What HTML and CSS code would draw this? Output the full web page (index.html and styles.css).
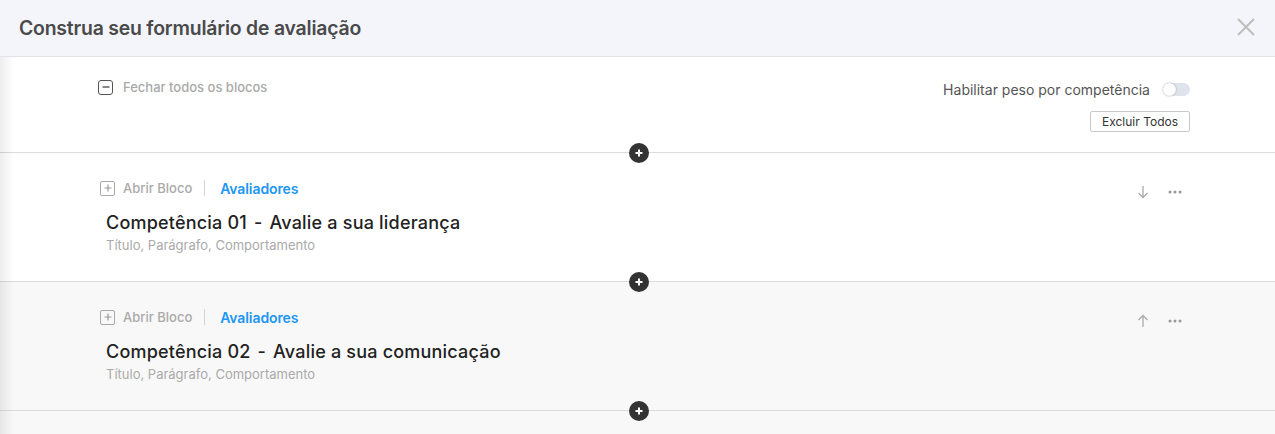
FILE: index.html
```html
<!DOCTYPE html>
<html lang="pt-BR">
<head>
<meta charset="utf-8">
<title>Construa seu formulário de avaliação</title>
<link rel="stylesheet" href="styles.css">
</head>
<body>
<div class="modal">
  <header class="header">
    <h1 class="header-title">Construa seu formulário de avaliação</h1>
    <button class="close" aria-label="Fechar">
      <svg width="20" height="20" viewBox="0 0 20 20"><path d="M2 2L18 18M18 2L2 18" stroke="#bdbdbd" stroke-width="2" fill="none"/></svg>
    </button>
  </header>
  <div class="content">
    <section class="toolbar section">
      <div class="collapse-all">
        <span class="box-icon"><svg width="10" height="10" viewBox="0 0 10 10"><path d="M1.5 5H8.5" stroke="#555" stroke-width="1.4"/></svg></span>
        <span>Fechar todos os blocos</span>
      </div>
      <div class="toolbar-right">
        <div class="weight">
          <span>Habilitar peso por competência</span>
          <span class="toggle"><span class="knob"></span></span>
        </div>
        <button class="btn">Excluir Todos</button>
      </div>
      <span class="add"><svg width="10" height="10" viewBox="0 0 10 10"><path d="M5 1.5V8.5M1.5 5H8.5" stroke="#fff" stroke-width="2"/></svg></span>
    </section>

    <section class="block section">
      <div class="block-main">
        <div class="block-actions">
          <span class="box-icon light"><svg width="10" height="10" viewBox="0 0 10 10"><path d="M5 1.5V8.5M1.5 5H8.5" stroke="#999" stroke-width="1.2"/></svg></span>
          <span class="open">Abrir Bloco</span>
          <span class="sep"></span>
          <span class="raters">Avaliadores</span>
        </div>
        <h2 class="block-title">Competência 01 <span class="dash">-</span> Avalie a sua liderança</h2>
        <p class="block-sub">Título, Parágrafo, Comportamento</p>
      </div>
      <div class="block-tools">
        <svg width="14" height="14" viewBox="0 0 14 14"><path d="M7 1V12.5M2.5 8L7 12.5L11.5 8" stroke="#aaa" stroke-width="1.3" fill="none"/></svg>
        <svg width="14" height="4" viewBox="0 0 14 4"><circle cx="2" cy="2" r="1.5" fill="#999"/><circle cx="7" cy="2" r="1.5" fill="#999"/><circle cx="12" cy="2" r="1.5" fill="#999"/></svg>
      </div>
      <span class="add"><svg width="10" height="10" viewBox="0 0 10 10"><path d="M5 1.5V8.5M1.5 5H8.5" stroke="#fff" stroke-width="2"/></svg></span>
    </section>

    <section class="block section alt">
      <div class="block-main">
        <div class="block-actions">
          <span class="box-icon light"><svg width="10" height="10" viewBox="0 0 10 10"><path d="M5 1.5V8.5M1.5 5H8.5" stroke="#999" stroke-width="1.2"/></svg></span>
          <span class="open">Abrir Bloco</span>
          <span class="sep"></span>
          <span class="raters">Avaliadores</span>
        </div>
        <h2 class="block-title">Competência 02 <span class="dash">-</span> Avalie a sua comunicação</h2>
        <p class="block-sub">Título, Parágrafo, Comportamento</p>
      </div>
      <div class="block-tools">
        <svg width="14" height="14" viewBox="0 0 14 14"><path d="M7 13V1.5M2.5 6L7 1.5L11.5 6" stroke="#aaa" stroke-width="1.3" fill="none"/></svg>
        <svg width="14" height="4" viewBox="0 0 14 4"><circle cx="2" cy="2" r="1.5" fill="#999"/><circle cx="7" cy="2" r="1.5" fill="#999"/><circle cx="12" cy="2" r="1.5" fill="#999"/></svg>
      </div>
      <span class="add"><svg width="10" height="10" viewBox="0 0 10 10"><path d="M5 1.5V8.5M1.5 5H8.5" stroke="#fff" stroke-width="2"/></svg></span>
    </section>
    <div class="rest"></div>
  </div>
</div>
</body>
</html>
```

FILE: styles.css
```css
* { box-sizing: border-box; }
html, body { margin: 0; padding: 0; }
body {
  font-family: Inter, "Noto Sans", "Liberation Sans", sans-serif;
  background: #f8f8f8;
  width: 1275px;
  height: 434px;
  overflow: hidden;
}
.modal { display: flex; flex-direction: column; height: 434px; }
.header {
  height: 57px;
  flex: none;
  background: #f4f5fa;
  border-bottom: 1px solid #e2e3e8;
  display: flex;
  align-items: center;
  justify-content: space-between;
  padding: 0 19px 0 19px;
}
.header-title {
  margin: 0;
  font-size: 19.4px;
  font-weight: 600;
  color: #4a4a4a;
  letter-spacing: -0.2px;
}
.close {
  border: 0;
  background: none;
  padding: 0;
  width: 20px;
  height: 20px;
  display: flex;
  margin-top: -2px;
}
.content {
  position: relative;
  flex: 1;
  display: flex;
  flex-direction: column;
}
.content::before {
  content: "";
  position: absolute;
  left: 0; top: 0; bottom: 0;
  width: 14px;
  background: linear-gradient(to right, rgba(0,0,0,0.07), rgba(0,0,0,0));
  pointer-events: none;
  z-index: 2;
}
.section {
  position: relative;
  border-bottom: 1px solid #dcdcdc;
  background: #fff;
}
.add {
  position: absolute;
  left: 629px;
  bottom: -11px;
  width: 20px;
  height: 20px;
  border-radius: 50%;
  background: #333;
  display: flex;
  align-items: center;
  justify-content: center;
  z-index: 1;
}
.toolbar {
  height: 96px;
  display: flex;
  justify-content: space-between;
  padding: 22px 85px 0 98px;
}
.collapse-all {
  display: flex;
  align-items: center;
  gap: 10px;
  height: 16px;
  font-size: 13px;
  font-weight: 500;
  color: #a9a9a9;
}
.box-icon {
  width: 15px;
  height: 15px;
  border: 1.3px solid #555;
  border-radius: 3px;
  display: flex;
  align-items: center;
  justify-content: center;
}
.box-icon.light {
  width: 15px;
  height: 15px;
  border: 1px solid #aaa;
  border-radius: 2px;
}
.toolbar-right {
  display: flex;
  flex-direction: column;
  align-items: flex-end;
  gap: 13px;
  padding-top: 1px;
}
.weight {
  display: flex;
  align-items: center;
  gap: 13px;
  font-size: 14px;
  color: #555;
  height: 18px;
}
.toggle {
  width: 27px;
  height: 13px;
  border-radius: 7px;
  background: #dfe4ec;
  position: relative;
  display: block;
}
.knob {
  position: absolute;
  left: 0;
  top: 0;
  width: 13px;
  height: 13px;
  border-radius: 50%;
  background: #fff;
  box-shadow: 0 0 2px rgba(0,0,0,0.35);
}
.btn {
  font-family: inherit;
  font-size: 12px;
  color: #333;
  background: #fff;
  border: 1px solid #c8c8c8;
  border-radius: 2px;
  width: 100px;
  height: 21px;
  padding: 0;
}
.block {
  height: 129px;
  display: flex;
  justify-content: space-between;
  padding: 26px 85px 0 100px;
}
.block.alt { background: #f8f8f8; }
.block-actions {
  display: flex;
  align-items: center;
  height: 18px;
  font-size: 13px;
}
.open { color: #aaa; font-weight: 500; margin-left: 8px; }
.sep {
  width: 1px;
  height: 16px;
  background: #d4d4d4;
  margin: 0 15px 0 12px;
}
.raters { color: #2196f3; font-weight: 600; font-size: 14px; letter-spacing: -0.1px; }
.block-title {
  margin: 15px 0 0 6px;
  font-size: 18px;
  font-weight: 500;
  color: #222;
  line-height: 22px;
  letter-spacing: 0.2px;
}
.dash { margin: 0 2px; }
.block-sub {
  margin: 3px 0 0 6px;
  font-size: 13px;
  color: #aaa;
  font-weight: 400;
  line-height: 16px;
}
.block-tools {
  display: flex;
  align-items: center;
  gap: 18px;
  height: 14px;
  margin-top: 6px;
  margin-right: 8px;
}
.rest { flex: 1; background: #f8f8f8; }
```
